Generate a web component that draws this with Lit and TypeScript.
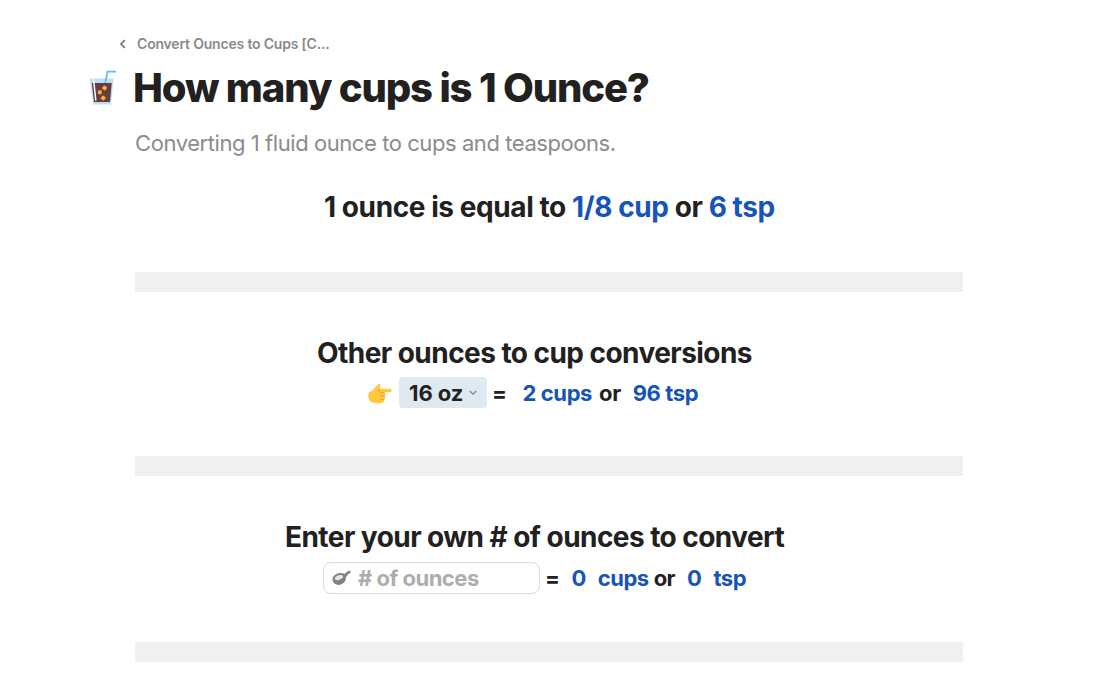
import { html, css, LitElement } from 'lit';
import { customElement, property } from 'lit/decorators.js';

@customElement('drink-icon')
export class DrinkIcon extends LitElement {
  static styles = css`
    :host {
      display: block;
      width: 28px;
      height: 36px;
    }

    svg {
      display: block;
    }
  `;

  render() {
    return html`
      <svg width="28" height="36" viewBox="0 0 28 36">
        <path d="M1 8.5H24.5L22 34.5H4Z" fill="#bbdefb" />
        <path d="M2.8 13H22.7L21 32H5Z" fill="#673f39" />
        <path d="M16.2 13L18.6 1.6H27" fill="none" stroke="#64b5f6" stroke-width="1.7" />
        <path d="M4.6 10L6.8 30" stroke="#fff" stroke-width="1.5" stroke-linecap="round" />
        <g fill="#ffa94d">
          <rect x="13.6" y="16" width="4" height="4" rx="0.8" transform="rotate(40 15.6 18)" />
          <rect x="8.9" y="20.4" width="3.8" height="3.8" rx="0.8" transform="rotate(10 10.8 22.3)" />
          <rect x="12.2" y="26" width="4" height="4" rx="0.8" transform="rotate(42 14.2 28)" />
        </g>
      </svg>
    `;
  }
}

@customElement('page-header')
export class PageHeader extends LitElement {
  static styles = css`
    :host {
      display: block;
    }

    .breadcrumb {
      display: flex;
      align-items: center;
      gap: 10px;
      height: 20px;
      padding-left: 119px;
      font-size: 14px;
      font-weight: 600;
      letter-spacing: -0.19px;
      color: #8a8a8a;
    }

    .breadcrumb svg {
      display: block;
      margin-top: 1px;
    }

    .title-row {
      display: flex;
      align-items: center;
      gap: 16px;
      height: 50px;
      margin-top: 10px;
      padding-left: 89px;
    }

    h1 {
      margin: 0;
      font-size: 40px;
      line-height: 50px;
      font-weight: 800;
      letter-spacing: -1.16px;
      white-space: nowrap;
    }

    .subtitle {
      margin: 15px 0 0;
      padding-left: 135px;
      font-size: 22px;
      line-height: 30px;
      letter-spacing: -0.43px;
      color: #8c8c8c;
    }
  `;

  @property({ type: String }) parent = '';

  @property({ type: String }) heading = '';

  @property({ type: String }) subtitle = '';

  render() {
    return html`
      <nav class="breadcrumb">
        <svg width="8" height="10" viewBox="0 0 8 10">
          <path d="M5.8 1.2L2 5L5.8 8.8" fill="none" stroke="#777" stroke-width="1.7" />
        </svg>
        <span>${this.parent}</span>
      </nav>
      <div class="title-row">
        <drink-icon></drink-icon>
        <h1>${this.heading}</h1>
      </div>
      <p class="subtitle">${this.subtitle}</p>
    `;
  }
}

@customElement('app-root')
export class AppRoot extends LitElement {
  static styles = css`
    :host {
      display: block;
      box-sizing: border-box;
      width: 100%;
      height: 680px;
      padding-top: 33px;
      overflow: hidden;
      background-color: #fff;
      color: #212121;
      font-family: Inter, 'Liberation Sans', sans-serif;
    }

    main {
      width: 828px;
      margin-left: 135px;
    }

    h2 {
      margin: 0;
      font-size: 28px;
      line-height: 36px;
      font-weight: 650;
      letter-spacing: -0.55px;
      white-space: nowrap;
    }

    .answer {
      margin-top: 31px;
      padding-left: 189px;
      letter-spacing: -0.42px;
    }

    .value {
      color: #1654b8;
    }

    .divider {
      height: 20px;
      background-color: #f0f0f0;
    }

    .answer + .divider {
      margin-top: 47px;
    }

    .section {
      box-sizing: border-box;
      height: 164px;
      padding-top: 43px;
    }

    .section.custom {
      height: 166px;
    }

    .other h2 {
      padding-left: 182px;
    }

    .custom h2 {
      padding-left: 150px;
    }

    .row {
      display: flex;
      align-items: center;
      height: 32px;
      margin-top: 7px;
      font-size: 22px;
      font-weight: 650;
      letter-spacing: -0.5px;
      white-space: nowrap;
    }

    .other .row {
      height: 31px;
      margin-top: 6px;
      padding-left: 233px;
      letter-spacing: -0.4px;
    }

    .custom .row {
      padding-left: 188px;
    }

    .pointer {
      margin-top: 2px;
    }

    .select {
      display: flex;
      align-items: center;
      box-sizing: border-box;
      gap: 6px;
      width: 88px;
      height: 31px;
      margin: 0 5px 0 7px;
      padding-left: 10px;
      border-radius: 4px;
      background-color: #dfeaf0;
      letter-spacing: -0.1px;
    }

    .field {
      display: flex;
      align-items: center;
      box-sizing: border-box;
      gap: 7px;
      width: 217px;
      height: 32px;
      margin-right: 5px;
      padding-left: 8px;
      border: 1px solid #dcdcdc;
      border-radius: 8px;
      color: #adadad;
    }

    .space-xs {
      margin-left: 5px;
    }

    .space-sm {
      margin-left: 7px;
    }

    .space-md {
      margin-left: 12px;
    }

    .space-lg {
      margin-left: 16px;
    }
  `;

  renderPointer() {
    return html`
      <svg class="pointer" width="24" height="22" viewBox="0 0 24 22">
        <path
          d="M0.8 9.5C2.8 8.6 4.6 7.4 6.1 5.7L10.1 1.4C11.2 0.3 13.1 1.4 12.4 3L11.3 5.7H21.7C24.3 5.7 24.3 9.3 21.7 9.3H15.8C18.1 9.7 18 12.5 16.4 12.9C17.7 13.5 17.5 16 15.8 16.4C16.7 17.3 16.1 19.3 14.2 19.7C10.3 20.6 5.5 20.5 3.2 19.1C0.4 17.3 -0.2 12.3 0.8 9.5Z"
          fill="#ffc83d"
        />
        <path
          d="M11.3 5.7L10.3 8.4M15.8 9.3H12.2M16.4 12.9H12.6M15.8 16.4H12.4"
          fill="none"
          stroke="#e8a52b"
          stroke-width="1"
          stroke-linecap="round"
        />
      </svg>
    `;
  }

  renderSpoon() {
    return html`
      <svg width="19" height="16" viewBox="0 0 19 16">
        <path
          d="M0.6 9C0.8 5.4 5 2.9 9 3C10.5 3.1 11.5 3.5 12.2 3.9C14 3.2 14.7 1.3 17.2 0.7C18.9 0.5 19.2 2.4 18 3C15.6 4.4 14.9 5.9 13.9 7.3C14.2 11.4 11 14.9 6.6 14.9C3 14.9 0.4 12.4 0.6 9Z"
          fill="#828282"
        />
        <path
          d="M2.8 8.3C3.5 6.2 6.2 4.9 8.7 5C10.6 5.1 11.5 6 10.9 7.3C10.2 8.9 8.9 8.6 7.8 9.4C6.6 10.3 5.6 10.3 4.6 9.9C3.2 9.7 2.5 9.2 2.8 8.3Z"
          fill="#e6e6e6"
        />
      </svg>
    `;
  }

  render() {
    return html`
      <page-header
        parent="Convert Ounces to Cups [C..."
        heading="How many cups is 1 Ounce?"
        subtitle="Converting 1 fluid ounce to cups and teaspoons."
      ></page-header>
      <main>
        <h2 class="answer">
          1 ounce is equal to <span class="value">1/8 cup</span> or <span class="value">6 tsp</span>
        </h2>
        <div class="divider"></div>
        <section class="section other">
          <h2>Other ounces to cup conversions</h2>
          <div class="row">
            ${this.renderPointer()}
            <span class="select">
              16 oz
              <svg width="8" height="6" viewBox="0 0 8 6">
                <path d="M0.8 1L4 4.2L7.2 1" fill="none" stroke="#7c8b93" stroke-width="1.3" />
              </svg>
            </span>
            <span>=</span>
            <span class="value space-lg">2 cups</span>
            <span class="space-sm">or</span>
            <span class="value space-md">96 tsp</span>
          </div>
        </section>
        <div class="divider"></div>
        <section class="section custom">
          <h2>Enter your own # of ounces to convert</h2>
          <div class="row">
            <span class="field">${this.renderSpoon()}# of ounces</span>
            <span>=</span>
            <span class="value space-md">0</span>
            <span class="value space-md">cups</span>
            <span class="space-xs">or</span>
            <span class="value space-md">0</span>
            <span class="value space-md">tsp</span>
          </div>
        </section>
        <div class="divider"></div>
      </main>
    `;
  }
}
